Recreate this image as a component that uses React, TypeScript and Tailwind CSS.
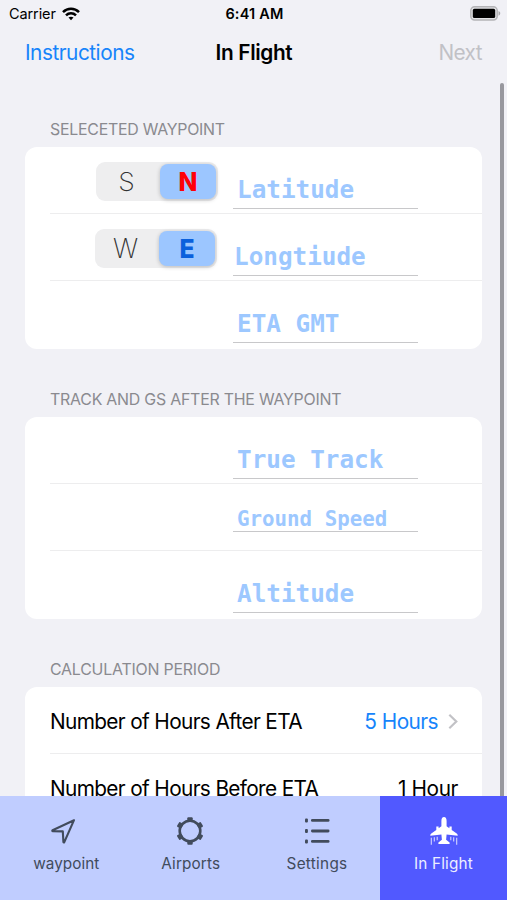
import React from "react";
import clsx from "clsx";

interface SectionProps {
  title: string;
  titleClass?: string;
  children: React.ReactNode;
}

function Section({ title, titleClass, children }: SectionProps) {
  return (
    <section className="mb-[41.5px] px-[25px]">
      <h2
        className={clsx(
          "mb-[7px] h-[20px] pl-[25px] text-[15.9px] leading-[20px] whitespace-nowrap text-[#8a8a8f]",
          titleClass
        )}
      >
        {title}
      </h2>
      <div className="overflow-hidden rounded-[12px] bg-white pl-[25px]">{children}</div>
    </section>
  );
}

function Row({ children, last }: { children: React.ReactNode; last?: boolean }) {
  return (
    <div className={clsx("flex h-[67.2px]", !last && "border-b-[1.5px] border-[#ededee]")}>
      {children}
    </div>
  );
}

interface FieldProps {
  label: string;
  className?: string;
  small?: boolean;
}

function Field({ label, className, small }: FieldProps) {
  return (
    <div
      className={clsx(
        "flex w-[185px] items-end self-start border-b-[1.5px] border-[#c8c8ca] font-['DejaVu_Sans_Mono','Liberation_Mono',monospace] font-bold whitespace-nowrap text-[#9dc8ff]",
        small ? "h-[48px] text-[20.8px] leading-[24px]" : "h-[62px] pb-[4px] text-[24.3px] leading-[28px]",
        className
      )}
    >
      {label}
    </div>
  );
}

interface ToggleProps {
  off: string;
  on: string;
  className?: string;
  onClassName: string;
}

function Toggle({ off, on, className, onClassName }: ToggleProps) {
  return (
    <div className={clsx("mt-[14.5px] flex h-[39px] w-[122px] rounded-[9px] bg-[#eeeeef] p-[2px]", className)}>
      <span className="flex w-[62px] items-center justify-center pt-[2px] pr-[5px] text-[26.5px] font-extralight text-[#333]">
        {off}
      </span>
      <span
        className={clsx(
          "flex w-[56px] items-center justify-center rounded-[8px] bg-[#9cc6ff] text-[26px] font-extrabold shadow-[0_1px_4px_rgba(0,0,0,0.22)]",
          onClassName
        )}
      >
        <span className="scale-x-[0.95]">{on}</span>
      </span>
    </div>
  );
}

function WifiIcon() {
  return (
    <svg width="18" height="14" viewBox="0 0 18 14" fill="none" stroke="#000" strokeWidth="2.5">
      <path d="M1 5.1C5.5.6 12.5.6 17 5.1" />
      <path d="M4 8.3c2.8-2.8 7.2-2.8 10 0" />
      <path d="M6.5 10.6c1.4-1.3 3.6-1.3 5 0L9 13.3z" fill="#000" stroke="none" />
    </svg>
  );
}

function BatteryIcon() {
  return (
    <svg width="31" height="15" viewBox="0 0 31 15">
      <rect x=".8" y=".8" width="26.4" height="13.2" rx="3.8" fill="#e3e3e6" stroke="#b4b4b7" strokeWidth="1.5" />
      <rect x="2.8" y="2.8" width="22.4" height="9.2" rx="1.6" fill="#000" />
      <path d="M28.5 5.1c2.3.8 2.3 3.8 0 4.6z" fill="#a9a9ac" />
    </svg>
  );
}

function WaypointIcon() {
  return (
    <svg width="28" height="30" viewBox="0 0 28 30" fill="none" stroke="#414b5c" strokeWidth="2.1" strokeLinejoin="round">
      <path d="M25 4.2 3.6 14.2c-.5.3-.4.9.2.9l10 .3.6 10.6c0 .7.6.7.9.2z" />
    </svg>
  );
}

function AirportIcon() {
  return (
    <svg className="ml-px" width="30" height="30" viewBox="0 0 30 30" fill="#414b5c">
      <circle cx="15" cy="15" r="10.3" fill="none" stroke="#414b5c" strokeWidth="2.6" />
      {[0, 60, 120, 180, 240, 300].map((angle) => (
        <rect key={angle} x="12.3" y="1.2" width="5.4" height="4.8" rx="1" transform={`rotate(${angle} 15 15)`} />
      ))}
    </svg>
  );
}

function ListIcon() {
  return (
    <svg width="28" height="30" viewBox="0 0 28 30" fill="#414b5c">
      {[4.4, 15, 25.4].map((y) => (
        <g key={y}>
          <rect x="2" y={y - 2} width="2.9" height="4" rx="1" />
          <rect x="8" y={y - 1.4} width="18.5" height="2.8" rx="1.3" />
        </g>
      ))}
    </svg>
  );
}

function PlaneIcon() {
  return (
    <svg width="30" height="30" viewBox="0 0 30 30" fill="#fff">
      <path d="M15 1.1c-1.7 0-2.6 1.7-2.6 3.8v5.4L9.6 12.2v-1.6H7.3v3.3l-5 3.5c-.8.6-1 1.2-1 2.4l11.1-1.4.5 5.4-3.5 2.7v1.4h11.2v-1.4l-3.5-2.7.5-5.4 11.1 1.4c0-1.2-.2-1.8-1-2.4l-5-3.5v-3.3h-2.3v1.6l-2.8-1.9V4.9c0-2.1-.9-3.8-2.6-3.8z" />
      <path
        d="M2.3 21.7v7M5.3 21.2v4.2M8.2 20.7v3.5M21.8 20.7v3.5M24.7 21.2v4.2M27.7 21.7v7"
        stroke="#fff"
        strokeOpacity="0.75"
        strokeWidth="1.1"
        fill="none"
      />
    </svg>
  );
}

const tabs = [
  { label: "waypoint", icon: <WaypointIcon />, labelClass: "pl-[6px] tracking-[0.05px]" },
  { label: "Airports", icon: <AirportIcon />, labelClass: "pl-[2px] tracking-[0.15px]" },
  { label: "Settings", icon: <ListIcon />, labelClass: "pl-px tracking-[0.3px]" },
  { label: "In Flight", icon: <PlaneIcon />, labelClass: "tracking-[0.2px]", active: true },
];

export default function App() {
  return (
    <div className="relative flex h-[900px] w-[507px] flex-col overflow-hidden bg-[#f1f1f6] font-['Inter','Liberation_Sans',sans-serif] text-black">
      {/* Status bar */}
      <div className="grid h-[27px] shrink-0 grid-cols-[1fr_auto_1fr] items-center pr-[6px] pl-[9px] text-[14.5px]">
        <div className="flex items-center gap-[6px]">
          <span className="tracking-[-0.1px]">Carrier</span>
          <WifiIcon />
        </div>
        <div className="-ml-px text-center font-semibold tracking-[0.2px]">6:41 AM</div>
        <div className="flex justify-end">
          <BatteryIcon />
        </div>
      </div>

      {/* Nav bar */}
      <header className="grid h-[51px] shrink-0 grid-cols-3 items-center px-[25px] text-[20.8px]">
        <button className="text-left tracking-[-0.48px] text-[#1684fb]">Instructions</button>
        <h1 className="pl-px text-center font-semibold tracking-[-0.35px]">In Flight</h1>
        <button className="text-right tracking-[-0.6px] text-[#c1c1c6]">Next</button>
      </header>

      <main className="min-h-0 flex-1 overflow-hidden pt-[42px]">
        <Section title="SELECETED WAYPOINT" titleClass="tracking-[-0.25px]">
          <Row>
            <Toggle off="S" on="N" className="ml-[46px]" onClassName="text-[#ff0008]" />
            <Field label="Latitude" className="ml-[15px] pl-[4px]" />
          </Row>
          <Row>
            <Toggle off="W" on="E" className="ml-[45px]" onClassName="text-[#0a60dc]" />
            <Field label="Longtiude" className="ml-[16px] pl-px" />
          </Row>
          <Row last>
            <Field label="ETA GMT" className="ml-[183px] pl-[4px]" />
          </Row>
        </Section>

        <Section title="TRACK AND GS AFTER THE WAYPOINT" titleClass="tracking-[-0.22px]">
          <Row>
            <Field label="True Track" className="ml-[183px] pl-[4px]" />
          </Row>
          <Row>
            <Field label="Ground Speed" small className="ml-[183px] pl-[4px]" />
          </Row>
          <Row last>
            <Field label="Altitude" className="ml-[183px] pl-[4px]" />
          </Row>
        </Section>

        <Section title="CALCULATION PERIOD" titleClass="tracking-[-0.2px]">
          <Row>
            <div className="flex flex-1 items-center pt-[2px] pr-[24px] text-[20.8px]">
              <span className="flex-1 tracking-[-0.64px]">Number of Hours After ETA</span>
              <span className="tracking-[-0.55px] text-[#1684fb]">5 Hours</span>
              <svg className="ml-[10px]" width="10" height="17" viewBox="0 0 10 17" fill="none" stroke="#c2c2c6" strokeWidth="2.2">
                <path d="m1.3 1.8 7 6.7-7 6.7" />
              </svg>
            </div>
          </Row>
          <Row last>
            <div className="flex flex-1 items-center pt-[2px] pr-[24px] text-[20.8px]">
              <span className="flex-1 tracking-[-0.64px]">Number of Hours Before ETA</span>
              <span className="tracking-[-0.4px]">1 Hour</span>
            </div>
          </Row>
        </Section>
      </main>

      {/* Scroll indicator */}
      <div className="absolute top-[83px] right-[3px] h-[713px] w-[4px] rounded-t-full bg-[#98989e]" />

      {/* Tab bar */}
      <nav className="z-10 grid h-[104px] shrink-0 grid-cols-[126.5px_126.5px_127px_127px] bg-[#c0cdff]">
        {tabs.map((tab) => (
          <button
            key={tab.label}
            className={clsx(
              "flex flex-col items-center pt-[20px] text-[15.3px] leading-[20px]",
              tab.active ? "bg-[#5159ff] text-[#eceeff]" : "text-[#414b5c]"
            )}
          >
            {tab.icon}
            <span className={clsx("mt-[8px]", tab.labelClass)}>{tab.label}</span>
          </button>
        ))}
      </nav>
    </div>
  );
}
